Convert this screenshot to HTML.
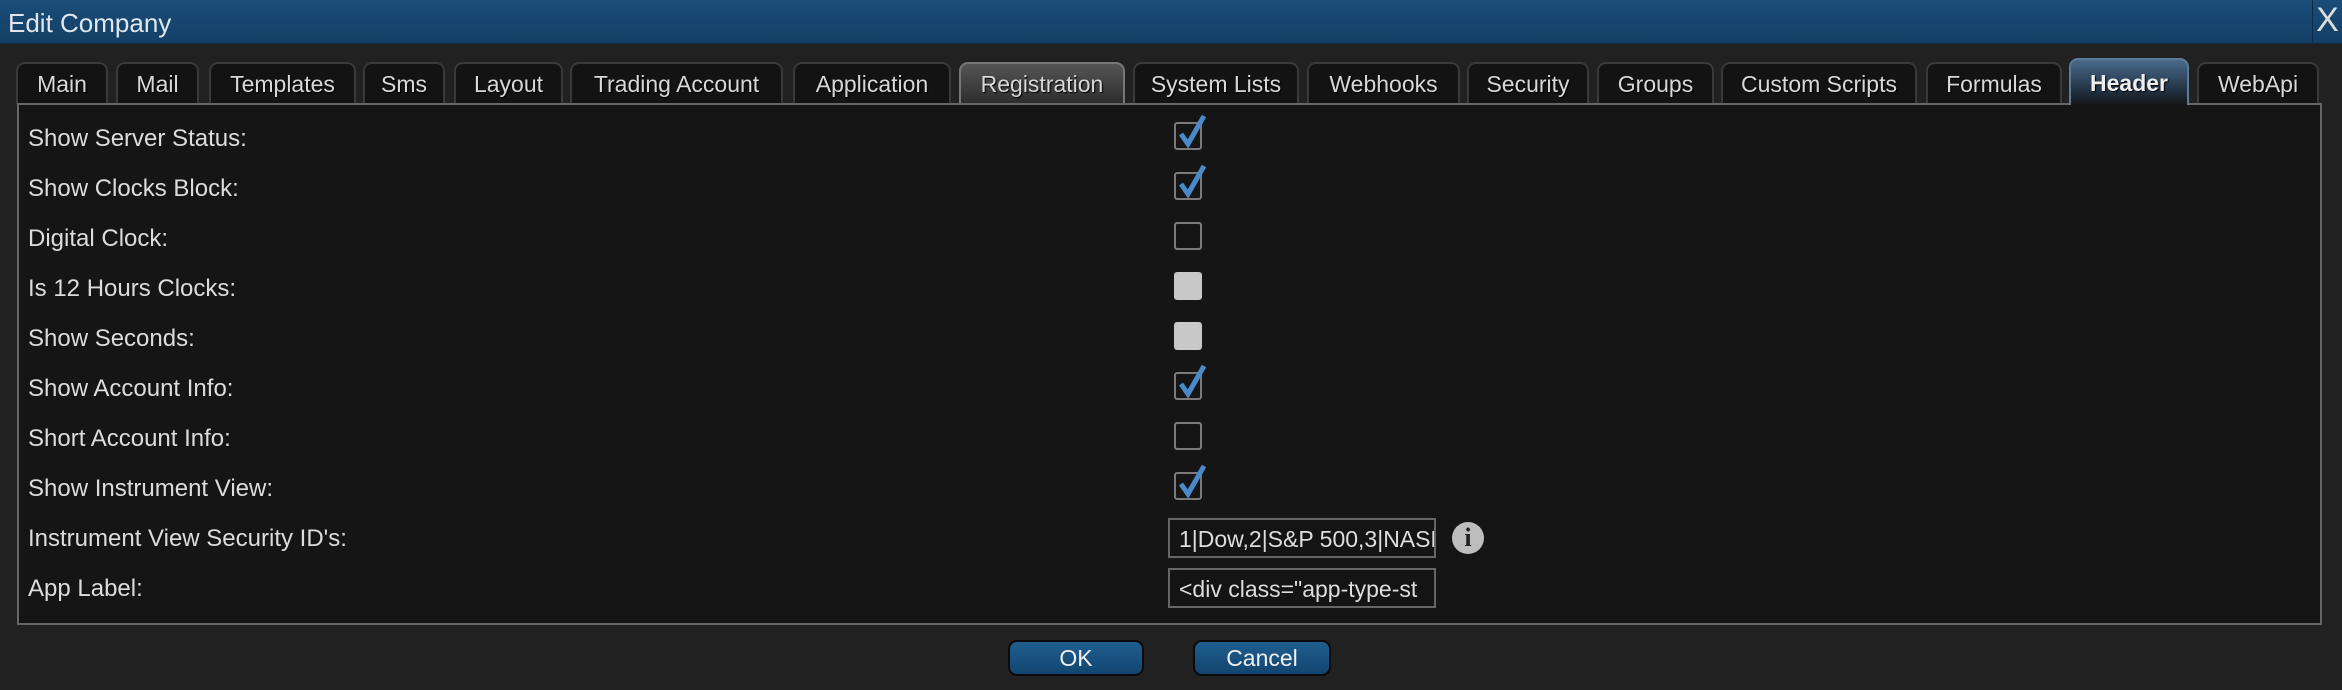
<!DOCTYPE html>
<html><head><meta charset="utf-8"><style>
*{box-sizing:border-box;margin:0;padding:0}
body{width:2342px;height:690px;background:#212121;position:relative;overflow:hidden;font-family:"Liberation Sans",sans-serif;color:#dcdcdc}
.title{position:absolute;left:0;top:0;width:2342px;height:44px;background:linear-gradient(#1a4d78,#123f66);border-bottom:1px solid #0d2c48}
.title span{position:absolute;left:8px;top:8px;font-size:26px;color:#e0e6ec}
.close{position:absolute;right:0;top:0;width:30px;height:42px;border-left:1px solid #0c2c48;color:#ddd;font-size:34px;text-align:center;line-height:40px}
.tab{position:absolute;top:62px;height:42px;background:#131313;border:2px solid #3a3a3a;border-bottom:none;border-radius:9px 9px 0 0;font-size:23px;text-align:center;line-height:40px;color:#d8d8d8;text-shadow:1px 1px 1px #000;white-space:nowrap}
.tab.reg{background:linear-gradient(#555,#2c2c2c);border-color:#777}
.tab.hdr{top:58px;height:47px;background:linear-gradient(#4a6a8c,#20303f 70%,#151515);border-color:#5a7a9a;font-weight:bold;color:#eee;z-index:2;line-height:46px}
.panel{position:absolute;left:17px;top:103px;width:2305px;height:522px;background:#151515;border:2px solid #666}
.lbl{position:absolute;left:28px;font-size:24px;color:#dcdcdc}
.cb{position:absolute;left:1174px;width:28px;height:28px;border:2px solid #7a7a7a;border-radius:3px}
.cb.dis{background:#c8c8c8;border-color:#c8c8c8}
.cb svg{position:absolute;left:2px;top:-10px}
.inp{position:absolute;left:1168px;width:268px;height:40px;border:2px solid #666;background:#141414;font-size:23px;color:#ddd;padding:6px 9px;white-space:nowrap;overflow:hidden}
.info{position:absolute;left:1452px;top:522px;width:32px;height:32px;border-radius:50%;background:#bdbdbd;color:#222;font-weight:bold;font-family:"Liberation Serif",serif;font-size:26px;text-align:center;line-height:32px}
.btn{position:absolute;top:640px;height:36px;border:2px solid #0a0a0a;border-radius:9px;background:linear-gradient(#1f5e8f,#124570);color:#f0f0f0;font-size:23px;text-align:center;line-height:32px}
</style></head><body>
<div class="title"><span>Edit Company</span><div class="close">X</div></div>
<div class="tab" style="left:16px;width:92px">Main</div>
<div class="tab" style="left:116px;width:83px">Mail</div>
<div class="tab" style="left:209px;width:147px">Templates</div>
<div class="tab" style="left:363px;width:82px">Sms</div>
<div class="tab" style="left:454px;width:109px">Layout</div>
<div class="tab" style="left:570px;width:213px">Trading Account</div>
<div class="tab" style="left:793px;width:158px">Application</div>
<div class="tab reg" style="left:959px;width:166px">Registration</div>
<div class="tab" style="left:1133px;width:166px">System Lists</div>
<div class="tab" style="left:1307px;width:153px">Webhooks</div>
<div class="tab" style="left:1467px;width:122px">Security</div>
<div class="tab" style="left:1597px;width:117px">Groups</div>
<div class="tab" style="left:1721px;width:196px">Custom Scripts</div>
<div class="tab" style="left:1926px;width:136px">Formulas</div>
<div class="tab hdr" style="left:2069px;width:120px">Header</div>
<div class="tab" style="left:2197px;width:122px">WebApi</div>
<div class="panel"></div>
<div class="lbl" style="top:125px">Show Server Status:</div>
<div class="lbl" style="top:175px">Show Clocks Block:</div>
<div class="lbl" style="top:225px">Digital Clock:</div>
<div class="lbl" style="top:275px">Is 12 Hours Clocks:</div>
<div class="lbl" style="top:325px">Show Seconds:</div>
<div class="lbl" style="top:375px">Show Account Info:</div>
<div class="lbl" style="top:425px">Short Account Info:</div>
<div class="lbl" style="top:475px">Show Instrument View:</div>
<div class="lbl" style="top:525px">Instrument View Security ID's:</div>
<div class="lbl" style="top:575px">App Label:</div>
<div class="cb" style="top:122px"><svg width="30" height="34"><path d="M3 20 L10 30 L26 2" stroke="#4a8ac8" stroke-width="5" fill="none"/></svg></div>
<div class="cb" style="top:172px"><svg width="30" height="34"><path d="M3 20 L10 30 L26 2" stroke="#4a8ac8" stroke-width="5" fill="none"/></svg></div>
<div class="cb" style="top:222px"></div>
<div class="cb dis" style="top:272px"></div>
<div class="cb dis" style="top:322px"></div>
<div class="cb" style="top:372px"><svg width="30" height="34"><path d="M3 20 L10 30 L26 2" stroke="#4a8ac8" stroke-width="5" fill="none"/></svg></div>
<div class="cb" style="top:422px"></div>
<div class="cb" style="top:472px"><svg width="30" height="34"><path d="M3 20 L10 30 L26 2" stroke="#4a8ac8" stroke-width="5" fill="none"/></svg></div>
<div class="inp" style="top:518px">1|Dow,2|S&amp;P 500,3|NASDAQ</div>
<div class="info">i</div>
<div class="inp" style="top:568px">&lt;div class="app-type-st</div>
<div class="btn" style="left:1008px;width:136px">OK</div>
<div class="btn" style="left:1193px;width:138px">Cancel</div>
</body></html>
